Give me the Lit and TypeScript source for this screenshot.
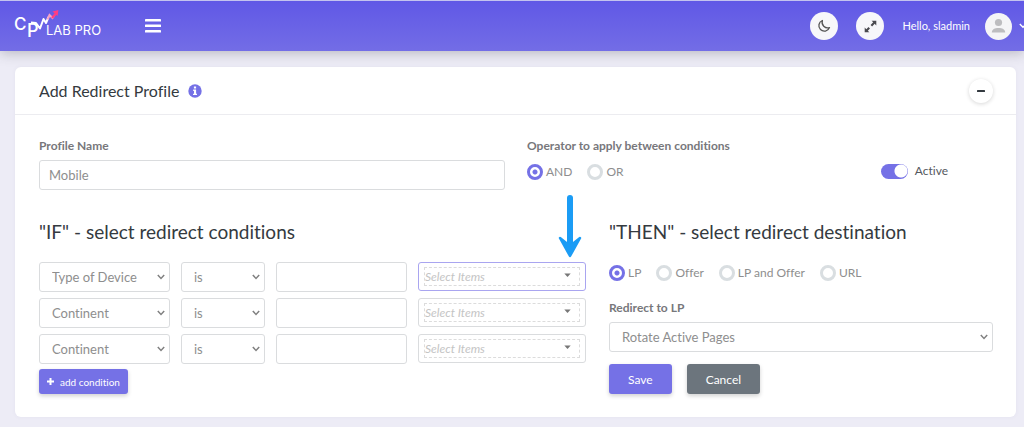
import { LitElement, html, css } from "lit";
import { customElement, property, state } from "lit/decorators.js";

const chevron = css`url("data:image/svg+xml,%3Csvg xmlns='http://www.w3.org/2000/svg' width='8' height='6' viewBox='0 0 8 6'%3E%3Cpath d='M.8 1 4 4.4 7.2 1' fill='none' stroke='%23808080' stroke-width='1.5'/%3E%3C/svg%3E")`;

const controls = css`
  * {
    box-sizing: border-box;
  }
  button,
  input,
  select {
    font-family: inherit;
    font-variant-ligatures: none;
    margin: 0;
  }
  .field,
  .select {
    display: block;
    width: 100%;
    min-width: 0;
    height: 30px;
    padding: 0 9px;
    border: 1px solid #dadcde;
    border-radius: 3px;
    background-color: #fff;
    color: #8e8e8e;
    font-size: 13px;
    outline: none;
  }
  .select {
    appearance: none;
    padding: 0 20px 0 12px;
    background-image: ${chevron};
    background-repeat: no-repeat;
    background-position: right 4px center;
  }
`;

@customElement("app-header")
class AppHeader extends LitElement {
  static styles = css`
    * {
      box-sizing: border-box;
    }
    .bar {
      display: flex;
      align-items: center;
      height: 51px;
      padding-left: 14px;
      border-top: 1px solid #c3c3ef;
      background: linear-gradient(#6058e6, #736de6);
      overflow: hidden;
    }
    .shadow {
      box-shadow: 0 2px 12px rgba(60, 60, 70, 0.3);
    }
    button {
      display: grid;
      place-items: center;
      padding: 0;
      border: 0;
      background: none;
      font-family: inherit;
    }
    .logo {
      display: block;
      margin-right: 40px;
    }
    .logo svg,
    button svg {
      display: block;
    }
    .right {
      display: flex;
      align-items: center;
      margin-left: auto;
    }
    .round {
      width: 28px;
      height: 28px;
      margin-right: 18px;
      border-radius: 50%;
      background: #f7f7fa;
    }
    .hello {
      margin: 0 15px 0 0;
      color: #fff;
      font-size: 11px;
      line-height: 20px;
      white-space: nowrap;
    }
    .user {
      grid-auto-flow: column;
      gap: 7px;
      width: 39px;
      justify-content: start;
      overflow: hidden;
    }
  `;

  render() {
    return html`
      <header class="shadow">
        <div class="bar">
          <a class="logo" href="#" aria-label="CPV Lab Pro">
            <svg width="91" height="32" viewBox="0 0 91 32" fill="none">
              <text x="0" y="20" font-family="Inter, sans-serif" font-size="17" font-weight="500" fill="#fff">C</text>
              <text x="13" y="27" font-family="Inter, sans-serif" font-size="18" font-weight="500" fill="#fff">P</text>
              <path d="M17 12.500l5 .5 4 5.500L29.500 9l2.500 4 2.500-6" stroke="#fff" stroke-width="2" stroke-linejoin="round" />
              <path d="m33.500 9.500 2-4.500 3 3 1.500-2" stroke="#f9a3c4" stroke-width="2" />
              <path d="m38 8 4.500-5" stroke="#ff3d83" stroke-width="2.400" />
              <path d="m38.500 1.500 5.900-1.400-.8 5.800z" fill="#ff3d83" />
              <text x="32" y="25" font-family="Inter, sans-serif" font-size="13" fill="#fff">LAB PRO</text>
            </svg>
          </a>
          <button aria-label="Toggle menu">
            <svg width="16" height="14" viewBox="0 0 16 14" fill="#fff">
              <rect width="16" height="2.600" rx=".4" />
              <rect y="5.500" width="16" height="2.600" rx=".4" />
              <rect y="11" width="16" height="2.600" rx=".4" />
            </svg>
          </button>
          <div class="right">
            <button class="round" aria-label="Dark mode">
              <svg width="14" height="14" viewBox="0 0 14 14" fill="none" stroke="#555" stroke-width="1.300" stroke-linejoin="round">
                <path d="M5.400 1.500A5.500 5.500 0 1 0 12.500 8.600 5.600 5.600 0 0 1 5.400 1.500z" />
              </svg>
            </button>
            <button class="round" aria-label="Full screen">
              <svg width="13" height="13" viewBox="0 0 13 13" fill="#4a4a4f">
                <path d="M7.600.7h4.700v4.700L10.700 3.800 8.100 6.400 6.600 4.900 9.200 2.300zM5.400 12.300H.7V7.600l1.600 1.600L4.500 7 6 8.500l-2.200 2.200z" />
              </svg>
            </button>
            <p class="hello">Hello, sladmin</p>
            <button class="user" aria-label="Account">
              <svg width="27" height="27" viewBox="0 0 27 27">
                <circle cx="13.500" cy="13.500" r="13.500" fill="#f5f5f6" />
                <circle cx="13.500" cy="9.500" r="3.600" fill="#bdbdbf" />
                <path d="M6.800 19.600c0-3.300 3-4.700 6.700-4.700s6.700 1.400 6.700 4.700z" fill="#bdbdbf" />
              </svg>
              <svg width="8" height="6" viewBox="0 0 8 6" fill="none" stroke="#fff" stroke-width="1.400">
                <path d="M.8 1 4 4.200 7.200 1" />
              </svg>
            </button>
          </div>
        </div>
      </header>
    `;
  }
}

@customElement("radio-group")
class RadioGroup extends LitElement {
  @property({ attribute: false }) options: string[] = [];
  @property() name = "";
  @state() selected = 0;

  static styles = css`
    :host {
      display: block;
    }
    .options {
      display: flex;
      gap: 15px;
    }
    label {
      display: flex;
      align-items: center;
      gap: 3px;
      color: #8e8e8e;
      font-size: 12px;
      line-height: 20px;
      white-space: nowrap;
    }
    input {
      appearance: none;
      box-sizing: border-box;
      width: 16px;
      height: 16px;
      margin: 0;
      border: 3px solid #d9dee1;
      border-radius: 50%;
      background: #fff;
    }
    input:checked {
      border-color: #7571e6;
      background: radial-gradient(circle, #7571e6 2px, #fff 3px);
    }
  `;

  render() {
    return html`<div class="options" role="radiogroup">
      ${this.options.map(
        (text, i) => html`<label>
          <input type="radio" name=${this.name} .checked=${i === this.selected} @change=${() => (this.selected = i)} />
          ${text}
        </label>`
      )}
    </div>`;
  }
}

@customElement("condition-row")
class ConditionRow extends LitElement {
  @property() kind = "";
  @property({ type: Boolean }) active = false;

  static styles = [
    controls,
    css`
      :host {
        display: block;
      }
      .row {
        display: grid;
        grid-template-columns: 131fr 84fr 131fr 168fr;
        gap: 11px;
      }
      .items {
        position: relative;
      }
      .picker {
        display: block;
        width: 100%;
        height: 29px;
        padding: 4px 5px;
        border: 1px solid #dadcde;
        border-radius: 3px;
        background: #fff;
      }
      .picker.active {
        border-color: #a9a5f0;
      }
      .inner {
        display: flex;
        justify-content: space-between;
        align-items: center;
        height: 19px;
        padding-right: 8px;
        border: 1px dashed #dcdcdc;
        color: #c4c4c4;
        font-size: 12px;
        font-style: italic;
      }
      .arrow {
        position: absolute;
        right: 4px;
        bottom: 33px;
        pointer-events: none;
      }
    `,
  ];

  render() {
    return html`<div class="row">
      <select class="select" aria-label="Condition">
        <option>${this.kind}</option>
      </select>
      <select class="select" aria-label="Comparison">
        <option>is</option>
      </select>
      <input class="field" type="text" aria-label="Value" />
      <div class="items">
        <button class="picker ${this.active ? "active" : ""}" aria-haspopup="listbox">
          <span class="inner">
            Select Items
            <svg width="7" height="9" viewBox="0 0 7 9"><path d="M.3 1.500h6.400L3.500 5z" fill="#777" /></svg>
          </span>
        </button>
        ${this.active
          ? html`<svg class="arrow" width="24" height="65" viewBox="0 0 24 65" fill="none" stroke="#1b9cf5" stroke-linecap="round">
              <path d="M12 4v50" stroke-width="6" />
              <path d="M2 44 12 62 22 44 12 52z" fill="#1b9cf5" stroke-width="2.500" stroke-linejoin="round" />
            </svg>`
          : null}
      </div>
    </div>`;
  }
}

@customElement("app-root")
class AppRoot extends LitElement {
  @state() conditions = ["Type of Device", "Continent", "Continent"];

  static styles = [
    controls,
    css`
      :host {
        display: block;
        min-height: 100vh;
        background: #edecf6;
        font-family: Lato, "Open Sans", sans-serif;
        font-variant-ligatures: none;
      }
      main {
        padding: 16px 8px 10px 15px;
      }
      .card {
        border-radius: 6px;
        background: #fff;
        box-shadow: 0 0 4px rgba(90, 90, 140, 0.06);
      }
      .head {
        display: flex;
        align-items: center;
        height: 48px;
        padding: 0 23px 0 24px;
        border-bottom: 1px solid #ececf0;
      }
      h1,
      h2 {
        margin: 0;
        color: #343a40;
        font-weight: 400;
      }
      h1 {
        margin-right: 9px;
        font-size: 16px;
        line-height: 24px;
      }
      h2 {
        font-size: 19px;
        line-height: 28px;
      }
      .collapse {
        display: grid;
        place-items: center;
        width: 24px;
        height: 24px;
        margin-left: auto;
        padding: 0;
        border: 0;
        border-radius: 50%;
        background: #fff;
        box-shadow: 0 1px 4px rgba(0, 0, 0, 0.16);
      }
      .body {
        padding: 21px 23px 23px 24px;
      }
      .row {
        display: grid;
        grid-template-columns: 1fr 1fr;
        gap: 22px;
      }
      .rules {
        grid-template-columns: 547fr 384fr;
        gap: 23px;
        margin-top: 28px;
      }
      .label {
        display: block;
        margin-bottom: 4px;
        color: #77777b;
        font-size: 12px;
        font-weight: 700;
        line-height: 20px;
      }
      .operator {
        display: flex;
        justify-content: space-between;
      }
      .operator .label {
        margin-bottom: 6px;
      }
      .switch {
        display: flex;
        align-items: center;
        align-self: flex-start;
        gap: 7px;
        margin: 25px 45px 0 0;
        color: #55595e;
        font-size: 12px;
        line-height: 20px;
      }
      .switch input {
        appearance: none;
        width: 27px;
        height: 15px;
        border-radius: 8px;
        background: radial-gradient(circle at 20px 7px, #fff 6px, #7571e6 7px);
      }
      .conditions {
        display: grid;
        gap: 6px;
        margin: 16px 0 5px;
      }
      .btn {
        height: 30px;
        padding: 0 19px;
        border: 0;
        border-radius: 3px;
        background: #7571e6;
        box-shadow: 0 2px 4px rgba(0, 0, 0, 0.18);
        color: #fff;
        font-size: 12px;
      }
      .grey {
        background: #6c757d;
      }
      .small {
        display: flex;
        align-items: center;
        gap: 6px;
        height: 25px;
        padding: 0 8px;
        font-size: 10px;
      }
      .options {
        margin: 17px 0 15px;
      }
      .actions {
        display: flex;
        gap: 15px;
        margin-top: 12px;
      }
    `,
  ];

  private addCondition() {
    this.conditions = [...this.conditions, "Continent"];
  }

  render() {
    return html`
      <app-header></app-header>
      <main>
        <section class="card">
          <div class="head">
            <h1>Add Redirect Profile</h1>
            <svg width="14" height="14" viewBox="0 0 14 14" role="img" aria-label="Info">
              <circle cx="7" cy="7" r="6.700" fill="#7571e6" />
              <path d="M5.900 2.500h2.200v2H5.900zM5.200 5.500h2.900v4.200h.9v1.400H5V9.700h1V6.900h-.8z" fill="#fff" />
            </svg>
            <button class="collapse" aria-label="Collapse">
              <svg width="8" height="2" viewBox="0 0 8 2"><rect width="8" height="2" rx=".5" fill="#343a40" /></svg>
            </button>
          </div>
          <form class="body" @submit=${(e: Event) => e.preventDefault()}>
            <div class="row">
              <div>
                <label class="label" for="name">Profile Name</label>
                <input class="field" id="name" type="text" value="Mobile" />
              </div>
              <div class="operator">
                <div>
                  <span class="label">Operator to apply between conditions</span>
                  <radio-group name="operator" .options=${["AND", "OR"]}></radio-group>
                </div>
                <label class="switch"><input type="checkbox" role="switch" checked />Active</label>
              </div>
            </div>
            <div class="row rules">
              <div>
                <h2>"IF" - select redirect conditions</h2>
                <div class="conditions">
                  ${this.conditions.map((kind, i) => html`<condition-row .kind=${kind} ?active=${i === 0}></condition-row>`)}
                </div>
                <button class="btn small" type="button" @click=${this.addCondition}>
                  <svg width="7" height="7" viewBox="0 0 7 7"><path d="M3.500 0v7M0 3.500h7" stroke="#fff" stroke-width="2" /></svg>
                  add condition
                </button>
              </div>
              <div>
                <h2>"THEN" - select redirect destination</h2>
                <radio-group class="options" name="destination" .options=${["LP", "Offer", "LP and Offer", "URL"]}></radio-group>
                <label class="label" for="target">Redirect to LP</label>
                <select class="select" id="target">
                  <option>Rotate Active Pages</option>
                </select>
                <div class="actions">
                  <button class="btn" type="submit">Save</button>
                  <button class="btn grey" type="button">Cancel</button>
                </div>
              </div>
            </div>
          </form>
        </section>
      </main>
    `;
  }
}
